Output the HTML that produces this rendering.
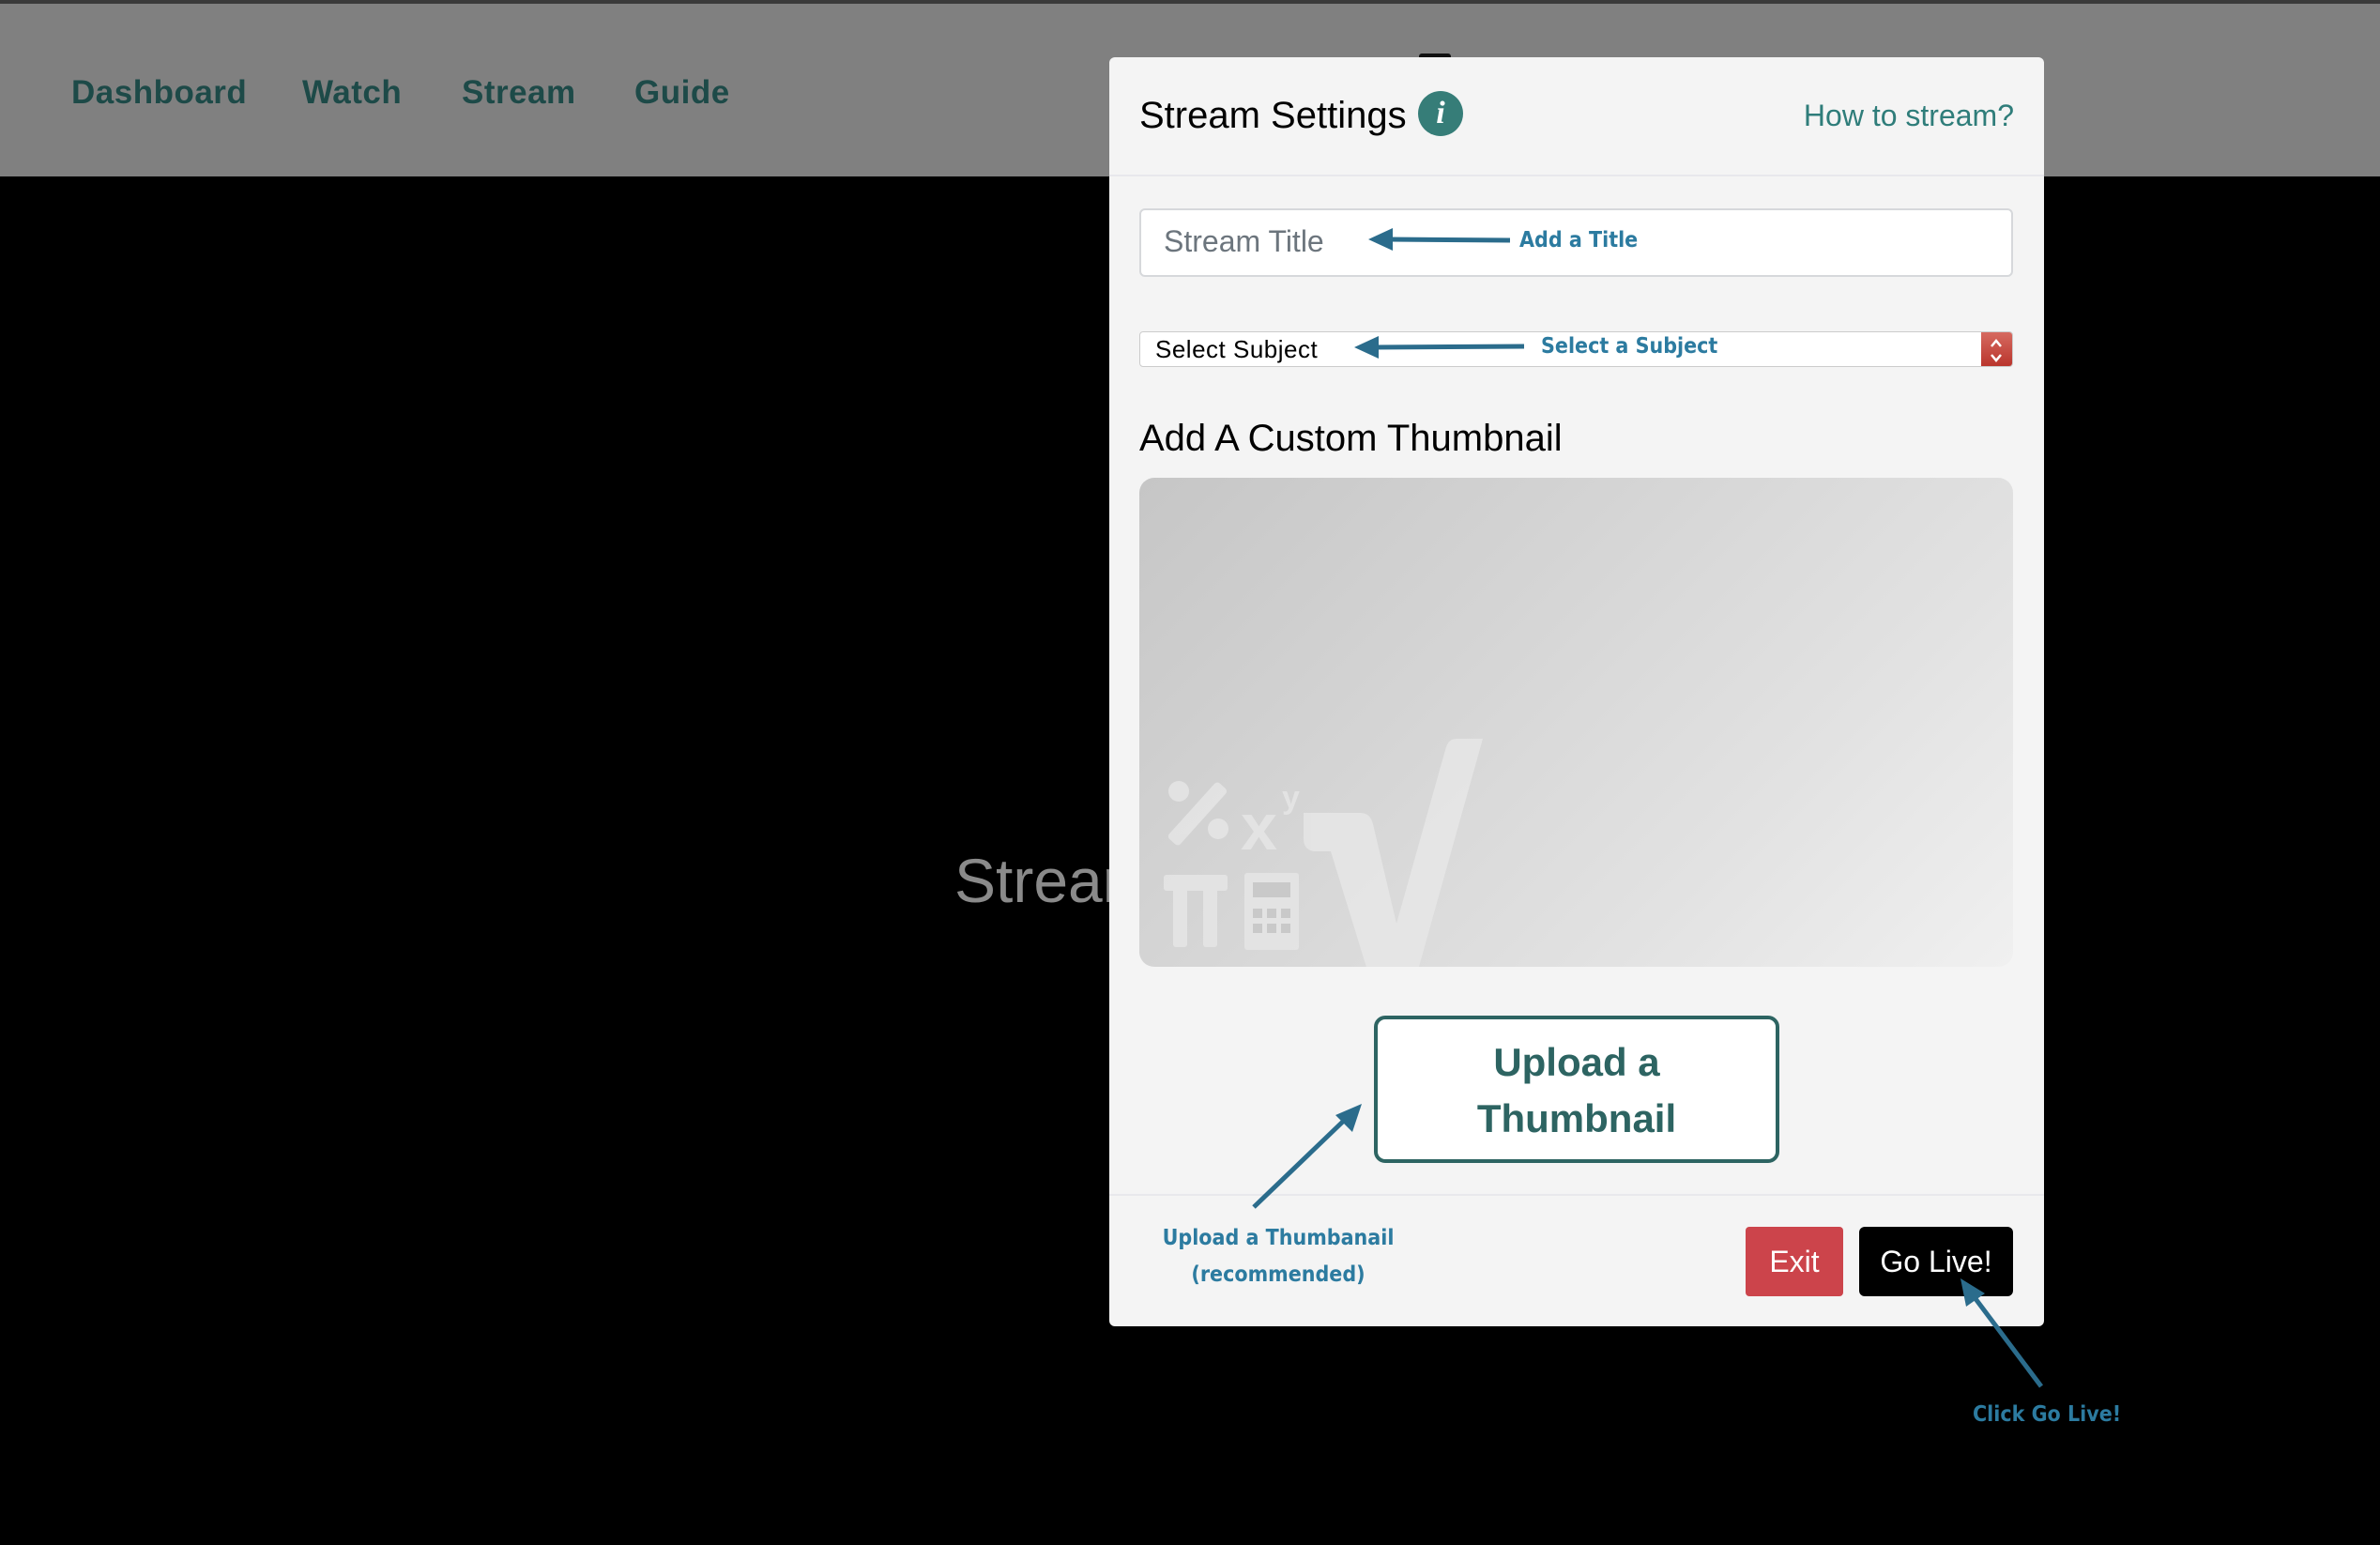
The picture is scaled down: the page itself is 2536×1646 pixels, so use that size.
<!DOCTYPE html>
<html><head><meta charset="utf-8"><style>
*{box-sizing:border-box;margin:0;padding:0}
body{width:2536px;height:1646px;background:#000;position:relative;overflow:hidden;font-family:"Liberation Sans",sans-serif}
.nav{position:absolute;left:0;top:0;width:2536px;height:188px;background:#808080;border-top:4px solid #3a3a3a}
.nav a{position:absolute;top:75px;font-size:35px;font-weight:bold;color:#1d4a48;letter-spacing:.5px}
.bg{position:absolute;left:1017px;top:900px;font-size:66px;color:#8a8a8a}
.modal{position:absolute;left:1182px;top:61px;width:996px;height:1352px;background:#f4f4f4;border-radius:6px}
.abs{position:absolute}
.ann{position:absolute;color:#2c7ba0;font-weight:bold;font-size:23px;white-space:nowrap;font-family:"DejaVu Sans Condensed","Liberation Sans",sans-serif}
</style></head><body>
<div class="nav">
<a style="left:76px">Dashboard</a><a style="left:322px">Watch</a><a style="left:492px">Stream</a><a style="left:676px">Guide</a>
</div>
<div class="bg">Stream</div>
<div class="abs" style="left:1512px;top:57px;width:34px;height:6px;background:#111;border-radius:3px 3px 0 0"></div>
<div class="modal">
 <div class="abs" style="left:32px;top:40px;font-size:40px;color:#000">Stream Settings</div>
 <div class="abs" style="left:329px;top:36px;width:48px;height:48px;border-radius:50%;background:#367d78;color:#fff;font:italic bold 34px 'Liberation Serif',serif;text-align:center;line-height:48px">i</div>
 <div class="abs" style="right:32px;top:44px;font-size:32px;color:#2f7d7a">How to stream?</div>
 <div class="abs" style="left:0;top:125px;width:996px;height:2px;background:#e8e8ec"></div>
 <div class="abs" style="left:32px;top:161px;width:931px;height:73px;background:#fff;border:2px solid #d6d8db;border-radius:6px"></div>
 <div class="abs" style="left:58px;top:178px;font-size:32px;color:#6c757d">Stream Title</div>
 <div class="abs" style="left:32px;top:292px;width:931px;height:38px;background:#fff;border:1px solid #ccc;border-radius:4px;overflow:hidden">
   <svg class="abs" style="right:0;top:0" width="33" height="38"><defs><linearGradient id="r" x1="0" y1="0" x2="0" y2="1"><stop offset="0" stop-color="#d66a60"/><stop offset="1" stop-color="#b8322a"/></linearGradient></defs><rect width="33" height="38" fill="url(#r)"/><path d="M11 15l5-6 5 6M11 24l5 6 5-6" stroke="#fff" stroke-width="2.5" fill="none"/></svg>
 </div>
 <div class="abs" style="left:49px;top:296px;font-size:26px;color:#000;letter-spacing:.5px">Select Subject</div>
 <div class="abs" style="left:32px;top:384px;font-size:40px;color:#000">Add A Custom Thumbnail</div>
 <div class="abs" style="left:32px;top:448px;width:931px;height:521px;border-radius:16px;background:linear-gradient(135deg,#c6c6c6,#e2e2e2 70%,#f0f0f0);overflow:hidden">
  <svg width="931" height="521" viewBox="0 0 931 521">
   <g fill="#e6e6e6" opacity=".85">
    <circle cx="42" cy="334" r="11"/><circle cx="84" cy="374" r="11"/>
    <rect x="22" y="350" width="80" height="16" rx="4" transform="rotate(-48 62 358)"/>
    <text x="108" y="396" font-size="70" font-family="Liberation Sans" font-weight="bold">x</text>
    <text x="152" y="352" font-size="34" font-family="Liberation Sans" font-weight="bold">y</text>
    <rect x="26" y="423" width="68" height="17" rx="3"/><rect x="36" y="430" width="15" height="70" rx="3"/><rect x="68" y="430" width="15" height="70" rx="3"/>
    <rect x="112" y="421" width="58" height="82" rx="3"/>
    <path d="M175 357h60c8 0 12 4 14 12l25 106 52-185c3-10 6-12 14-12h26l-70 250h-52l-40-130h-16c-8 0-13-5-13-13z"/>
   </g>
   <g fill="#c9c9c9"><rect x="121" y="431" width="40" height="16"/>
    <rect x="121" y="459" width="10" height="10"/><rect x="136" y="459" width="10" height="10"/><rect x="151" y="459" width="10" height="10"/>
    <rect x="121" y="475" width="10" height="10"/><rect x="136" y="475" width="10" height="10"/><rect x="151" y="475" width="10" height="10"/></g>
  </svg>
 </div>
 <div class="abs" style="left:282px;top:1021px;width:432px;height:157px;border:4px solid #2d6462;border-radius:12px;background:#fff;color:#2d6462;font-size:42px;font-weight:bold;text-align:center;line-height:60px;padding-top:16px">Upload a<br>Thumbnail</div>
 <div class="abs" style="left:0;top:1211px;width:996px;height:2px;background:#e8e8ec"></div>
 <div class="abs" style="left:678px;top:1246px;width:104px;height:74px;background:#cc444b;border-radius:4px;color:#fff;font-size:32px;text-align:center;line-height:74px">Exit</div>
 <div class="abs" style="left:799px;top:1246px;width:164px;height:74px;background:#000;border-radius:6px;color:#fff;font-size:32px;text-align:center;line-height:74px">Go Live!</div>
</div>
<svg class="abs" style="left:0;top:0" width="2536" height="1646">
 <g stroke="#2b6c8c" stroke-width="5" fill="#2b6c8c">
  <line x1="1609" y1="256" x2="1480" y2="255"/><path d="M1458 255l26-12v24z" stroke="none"/>
  <line x1="1624" y1="369" x2="1464" y2="370"/><path d="M1443 370l26-12v24z" stroke="none"/>
  <line x1="1336" y1="1286" x2="1436" y2="1190"/><path d="M1451 1176l-10 30-18-18z" stroke="none"/>
  <line x1="2175" y1="1477" x2="2100" y2="1377"/><path d="M2089 1362l26 16-20 14z" stroke="none"/>
 </g>
</svg>
<div class="ann" style="left:1619px;top:243px">Add a Title</div>
<div class="ann" style="left:1642px;top:356px">Select a Subject</div>
<div class="ann" style="left:1212px;top:1300px;text-align:center;width:300px;line-height:39px">Upload a Thumbanail<br>(recommended)</div>
<div class="ann" style="left:2102px;top:1494px">Click Go Live!</div>
</body></html>
